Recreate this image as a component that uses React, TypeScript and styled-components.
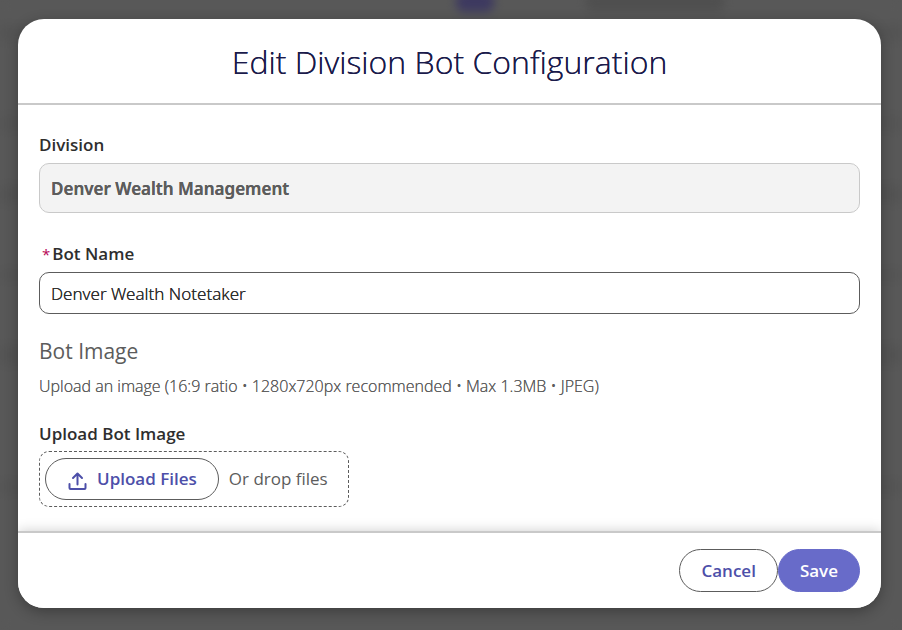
import React from "react";
import styled, { createGlobalStyle } from "styled-components";

const GlobalStyle = createGlobalStyle`
  *, *::before, *::after { box-sizing: border-box; }
  body {
    margin: 0;
    background: #585858;
    color: #2e2e2e;
    font-family: "Segoe UI", "Open Sans", "Noto Sans", sans-serif;
    font-size: 17px;
    line-height: 24px;
  }
  button, input { font: inherit; }
`;

const Screen = styled.div`
  position: relative;
  min-height: 100vh;
  padding: 19px 21px 22px 18px;
  overflow: hidden;
`;

const Backdrop = styled.div`
  position: absolute;
  inset: 0;
  filter: blur(5px);
  background: linear-gradient(
    #585858 20px, #525252 32px, #585858 46px, #585858 110px,
    #545454 124px, #585858 136px, #585858 180px, #525252 195px,
    #585858 208px, #585858 265px, #545454 275px, #585858 285px,
    #585858 340px, #525252 355px, #585858 370px, #585858 475px,
    #545454 487px, #585858 499px
  );
`;

const BackdropMark = styled.div<{ $left: string; $width: number; $color: string }>`
  position: absolute;
  top: -8px;
  left: ${(p) => p.$left};
  width: ${(p) => p.$width}px;
  height: 20px;
  border-radius: 8px;
  background: ${(p) => p.$color};
`;

const Dialog = styled.form`
  position: relative;
  display: flex;
  flex-direction: column;
  border-radius: 26px;
  background: #fff;
  overflow: hidden;
  box-shadow: 0 4px 14px rgba(0, 0, 0, 0.3);
`;

const Header = styled.header`
  padding: 23px 21px 21px;
  border-bottom: 2px solid #c9c9c9;
  text-align: center;
`;

const Title = styled.h1`
  margin: 0;
  color: #1b1b4b;
  font-size: 32px;
  font-weight: 300;
  line-height: 40px;
  text-shadow: 0 0 currentColor;
`;

const Body = styled.div`
  flex: 1;
  display: flex;
  flex-direction: column;
  gap: 23px;
  padding: 28px 21px 24px;
`;

const Field = styled.div<{ $spaced?: boolean }>`
  display: flex;
  flex-direction: column;
  gap: 6px;
  padding-bottom: ${(p) => (p.$spaced ? 6 : 0)}px;
`;

const Label = styled.label`
  font-size: 17px;
  font-weight: 600;
`;

const Required = styled.abbr`
  margin: 0 2px 0 3px;
  color: #b60554;
  font-size: 15px;
  font-weight: 400;
  text-decoration: none;
`;

const TextInput = styled.input`
  width: 100%;
  height: 42px;
  padding: 0 11px;
  border: 1px solid #5c5c5c;
  border-radius: 10px;
  background: #fff;
  color: #2e2e2e;
  font-family: "Segoe UI", "Noto Sans", sans-serif;
  font-weight: 300;
  text-shadow: 0 0 currentColor;

  &:disabled {
    height: 50px;
    border-color: #c9c9c9;
    background: #f3f3f3;
    color: #5c5c5c;
    font-weight: 600;
  }
`;

const ImageSection = styled.section`
  display: flex;
  flex-direction: column;
`;

const SectionTitle = styled.h2`
  margin: 0 0 9px;
  color: #5c5c5c;
  font-size: 21px;
  font-weight: 400;
  line-height: 28px;
`;

const Hint = styled.p`
  margin: 0 0 24px;
  color: #5c5c5c;
  font-size: 16px;
  font-weight: 300;
  text-shadow: 0 0 currentColor;
`;

const DropZone = styled.div`
  display: flex;
  align-items: center;
  align-self: flex-start;
  gap: 10px;
  margin-top: 5px;
  padding: 6px 20px 6px 5px;
  border: 1px dashed #5c5c5c;
  border-radius: 10px;
  color: #5c5c5c;
`;

const Button = styled.button<{ $primary?: boolean }>`
  display: inline-flex;
  align-items: center;
  justify-content: center;
  gap: 10px;
  height: 42px;
  padding: 0 21px;
  border: 1px solid ${(p) => (p.$primary ? "#686bc9" : "#5c5c5c")};
  border-radius: 22px;
  background: ${(p) => (p.$primary ? "#686bc9" : "#fff")};
  color: ${(p) => (p.$primary ? "#fff" : "#4d4fa9")};
  font-weight: 600;
  cursor: pointer;
`;

const Footer = styled.footer`
  display: flex;
  justify-content: flex-end;
  padding: 16px 21px;
  border-top: 2px solid #c9c9c9;
  background: #fff;
  box-shadow: 0 0 12px rgba(0, 0, 0, 0.2);
`;

const FooterButton = styled(Button)`
  height: 43px;
`;

const UploadIcon = () => (
  <svg width="20" height="24" viewBox="0 0 20 24" fill="none" stroke="currentColor" strokeWidth="2" strokeLinecap="round" strokeLinejoin="round" aria-hidden="true">
    <path d="M10.5 17.5V7M6 11l4.5-4.5L15 11" />
    <path d="M2.5 17v4q0 1 1 1h14q1 0 1-1V17" />
  </svg>
);

export default function App() {
  return (
    <>
      <GlobalStyle />
      <Screen>
        <Backdrop>
          <BackdropMark $left="50.5%" $width={38} $color="#3d3960" />
          <BackdropMark $left="65%" $width={138} $color="#4f4f4f" />
        </Backdrop>
        <Dialog role="dialog" aria-labelledby="dialog-title" onSubmit={(e) => e.preventDefault()}>
          <Header>
            <Title id="dialog-title">Edit Division Bot Configuration</Title>
          </Header>
          <Body>
            <Field $spaced>
              <Label htmlFor="division">Division</Label>
              <TextInput id="division" defaultValue="Denver Wealth Management" disabled />
            </Field>
            <Field>
              <Label htmlFor="bot-name">
                <Required title="required">*</Required>Bot Name
              </Label>
              <TextInput id="bot-name" defaultValue="Denver Wealth Notetaker" required />
            </Field>
            <ImageSection>
              <SectionTitle>Bot Image</SectionTitle>
              <Hint>Upload an image (16:9 ratio • 1280x720px recommended • Max 1.3MB • JPEG)</Hint>
              <Label as="span" id="upload-label">Upload Bot Image</Label>
              <DropZone role="group" aria-labelledby="upload-label">
                <Button type="button">
                  <UploadIcon />
                  Upload Files
                </Button>
                Or drop files
              </DropZone>
            </ImageSection>
          </Body>
          <Footer>
            <FooterButton type="button">Cancel</FooterButton>
            <FooterButton type="submit" $primary>Save</FooterButton>
          </Footer>
        </Dialog>
      </Screen>
    </>
  );
}
